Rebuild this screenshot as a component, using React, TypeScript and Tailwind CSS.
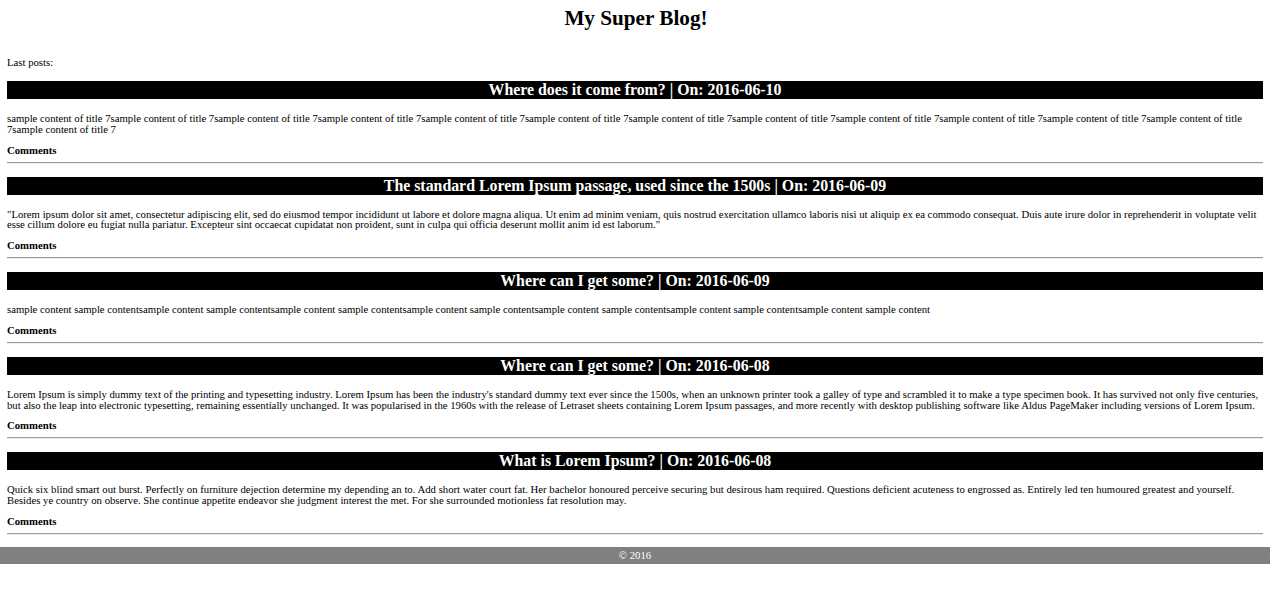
import React from "react";

interface Post {
    title: string;
    date: string;
    content: string;
}

const posts: Post[] = [
    {
        title: "Where does it come from?",
        date: "2016-06-10",
        content: Array(13).fill("sample content of title 7").join(""),
    },
    {
        title: "The standard Lorem Ipsum passage, used since the 1500s",
        date: "2016-06-09",
        content:
            "\"Lorem ipsum dolor sit amet, consectetur adipiscing elit, sed do eiusmod tempor incididunt ut labore et dolore magna aliqua. Ut enim ad minim veniam, quis nostrud exercitation ullamco laboris nisi ut aliquip ex ea commodo consequat. Duis aute irure dolor in reprehenderit in voluptate velit esse cillum dolore eu fugiat nulla pariatur. Excepteur sint occaecat cupidatat non proident, sunt in culpa qui officia deserunt mollit anim id est laborum.\"",
    },
    {
        title: "Where can I get some?",
        date: "2016-06-09",
        content: Array(7).fill("sample content sample content").join(""),
    },
    {
        title: "Where can I get some?",
        date: "2016-06-08",
        content:
            "Lorem Ipsum is simply dummy text of the printing and typesetting industry. Lorem Ipsum has been the industry's standard dummy text ever since the 1500s, when an unknown printer took a galley of type and scrambled it to make a type specimen book. It has survived not only five centuries, but also the leap into electronic typesetting, remaining essentially unchanged. It was popularised in the 1960s with the release of Letraset sheets containing Lorem Ipsum passages, and more recently with desktop publishing software like Aldus PageMaker including versions of Lorem Ipsum.",
    },
    {
        title: "What is Lorem Ipsum?",
        date: "2016-06-08",
        content:
            "Quick six blind smart out burst. Perfectly on furniture dejection determine my depending an to. Add short water court fat. Her bachelor honoured perceive securing but desirous ham required. Questions deficient acuteness to engrossed as. Entirely led ten humoured greatest and yourself. Besides ye country on observe. She continue appetite endeavor she judgment interest the met. For she surrounded motionless fat resolution may.",
    },
];

function PostItem({ post }: { post: Post }) {
    return (
        <div className="flex flex-col">
            <h2 className="h-[18px] bg-black text-center text-[15.85px] font-bold leading-[18px] text-white">
                {post.title} | On: {post.date}
            </h2>
            <p className="mt-[14px] text-[10.72px] leading-[10.75px]">{post.content}</p>
            <div className="mt-[10px] text-[10.72px] font-bold leading-[11px]">Comments</div>
            <hr className="mt-[6px] h-[2px] border-0 border-t border-b border-t-[#9a9a9a] border-b-[#eeeeee]" />
        </div>
    );
}

export default function App() {
    return (
        <div className="min-h-[593px] bg-white text-black" style={{ fontFamily: '"Liberation Serif", "Times New Roman", serif' }}>
            <h1 className="pt-[6px] text-center text-[21.2px] font-bold leading-[24px]">My Super Blog!</h1>
            <div className="px-[7px] pr-[9px]">
                <p className="mt-[27px] text-[10.72px] leading-[11px]">Last posts:</p>
                <div className="mt-[13px] flex flex-col gap-[13px]">
                    {posts.map((post, i) => (
                        <PostItem key={i} post={post} />
                    ))}
                </div>
            </div>
            <footer className="mr-[2px] mt-[12px] h-[17px] bg-[#808080] text-center text-[10.72px] leading-[16px] text-white">
                © 2016
            </footer>
        </div>
    );
}
